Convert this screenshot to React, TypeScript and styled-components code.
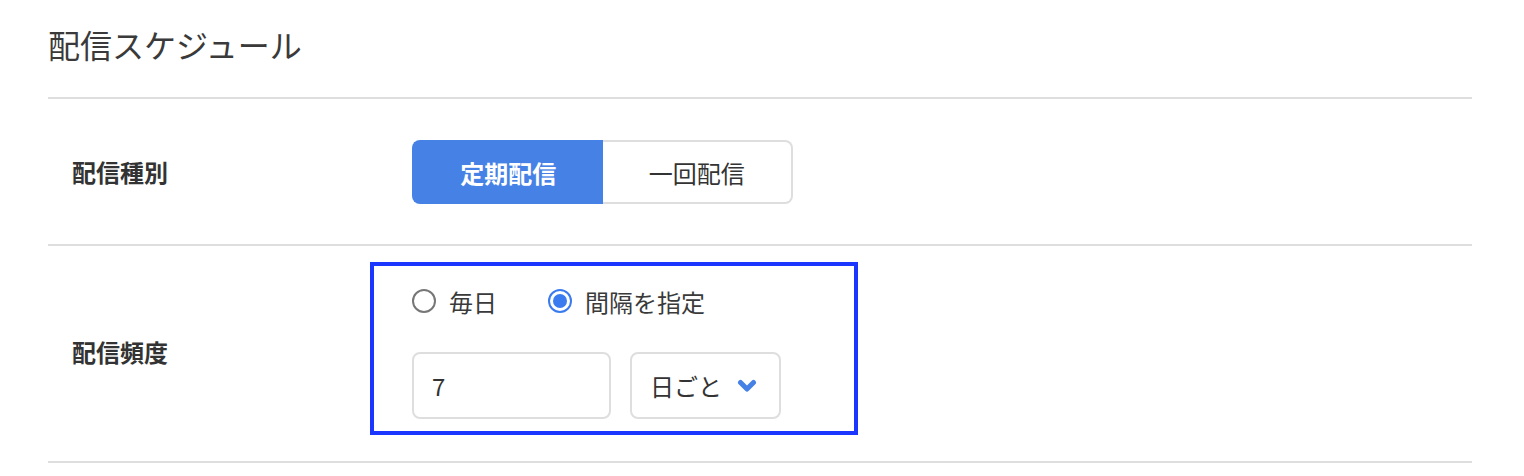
import React, { useState } from "react";
import styled, { createGlobalStyle } from "styled-components";

const GlobalStyle = createGlobalStyle`
  html, body {
    margin: 0;
    padding: 0;
    background: #ffffff;
  }
  body {
    font-family: "Noto Sans CJK JP", "Noto Sans", "Liberation Sans", sans-serif;
    color: #333333;
  }
  * { box-sizing: border-box; }
`;

const Page = styled.div`
  padding: 0 52px 0 48px;
  width: 1524px;
`;

const Header = styled.h1`
  margin: 0;
  padding: 22px 0 31px;
  font-size: 32px;
  line-height: 44px;
  font-weight: 400;
  color: #3a3a3a;
  border-bottom: 2px solid #dedede;
`;

const Row = styled.section<{ $pt: number; $pb: number }>`
  display: grid;
  grid-template-columns: 340px 1fr;
  align-items: center;
  padding: ${(p) => p.$pt}px 0 ${(p) => p.$pb}px 24px;
  border-bottom: 2px solid #dedede;
`;

const Label = styled.div<{ $dy?: number }>`
  font-size: 24px;
  font-weight: 700;
  color: #333333;
  line-height: 32px;
  transform: translateY(${(p) => p.$dy ?? 0}px);
`;

const Segmented = styled.div`
  display: flex;
  width: 381px;
  height: 64px;
`;

const Segment = styled.button<{ $active: boolean; $first?: boolean }>`
  flex: 1 1 0;
  display: flex;
  align-items: center;
  justify-content: center;
  font-family: inherit;
  font-size: 24px;
  font-weight: ${(p) => (p.$active ? 700 : 400)};
  color: ${(p) => (p.$active ? "#ffffff" : "#333333")};
  background: ${(p) => (p.$active ? "#4681e6" : "#ffffff")};
  border: 2px solid ${(p) => (p.$active ? "#4681e6" : "#dedede")};
  ${(p) => (p.$first ? "border-right: none;" : "border-left: none;")}
  border-radius: ${(p) => (p.$first ? "8px 0 0 8px" : "0 8px 8px 0")};
  padding: 0;
  cursor: pointer;
`;

const Frame = styled.div`
  margin-left: -42px;
  width: 488px;
  border: 4px solid #1b36ff;
  padding: 17px 0 12px 38px;
  display: flex;
  flex-direction: column;
  gap: 33px;
`;

const RadioGroup = styled.div`
  display: flex;
  align-items: center;
  gap: 51px;
  height: 36px;
`;

const RadioOption = styled.label`
  display: flex;
  align-items: center;
  gap: 13px;
  font-size: 24px;
  color: #3a3a3a;
  cursor: pointer;
`;

const RadioCircle = styled.span<{ $checked: boolean }>`
  width: 24px;
  height: 24px;
  border-radius: 50%;
  border: 2px solid ${(p) => (p.$checked ? "#3a7bf0" : "#777777")};
  display: flex;
  align-items: center;
  justify-content: center;
  &::after {
    content: "";
    width: 14px;
    height: 14px;
    border-radius: 50%;
    background: ${(p) => (p.$checked ? "#3a7bf0" : "transparent")};
  }
`;

const Controls = styled.div`
  display: flex;
  gap: 19px;
`;

const Field = styled.div<{ $w: number }>`
  width: ${(p) => p.$w}px;
  height: 67px;
  border: 2px solid #dedede;
  border-radius: 8px;
  display: flex;
  align-items: center;
  justify-content: space-between;
  padding: 0 22px 0 18px;
  font-size: 24px;
  color: #333333;
`;

const ChevronSvg = styled.svg`
  display: block;
  width: 20px;
  height: 14px;
`;

const Chevron = () => (
  <ChevronSvg viewBox="0 0 20 14">
    <path
      d="M3.5 3.5 L10 10 L16.5 3.5"
      fill="none"
      stroke="#4681e6"
      strokeWidth="5"
      strokeLinecap="round"
      strokeLinejoin="round"
    />
  </ChevronSvg>
);

export default function App() {
  const [kind, setKind] = useState<"periodic" | "once">("periodic");
  const [freq, setFreq] = useState<"daily" | "interval">("interval");

  return (
    <>
      <GlobalStyle />
      <Page>
        <Header>配信スケジュール</Header>
        <Row $pt={41} $pb={40}>
          <Label>配信種別</Label>
          <Segmented>
            <Segment $first $active={kind === "periodic"} onClick={() => setKind("periodic")}>
              定期配信
            </Segment>
            <Segment $active={kind === "once"} onClick={() => setKind("once")}>
              一回配信
            </Segment>
          </Segmented>
        </Row>
        <Row $pt={16} $pb={26}>
          <Label $dy={3}>配信頻度</Label>
          <Frame>
            <RadioGroup>
              <RadioOption onClick={() => setFreq("daily")}>
                <RadioCircle $checked={freq === "daily"} />
                毎日
              </RadioOption>
              <RadioOption onClick={() => setFreq("interval")}>
                <RadioCircle $checked={freq === "interval"} />
                間隔を指定
              </RadioOption>
            </RadioGroup>
            <Controls>
              <Field $w={199}>7</Field>
              <Field $w={151}>
                日ごと
                <Chevron />
              </Field>
            </Controls>
          </Frame>
        </Row>
      </Page>
    </>
  );
}
